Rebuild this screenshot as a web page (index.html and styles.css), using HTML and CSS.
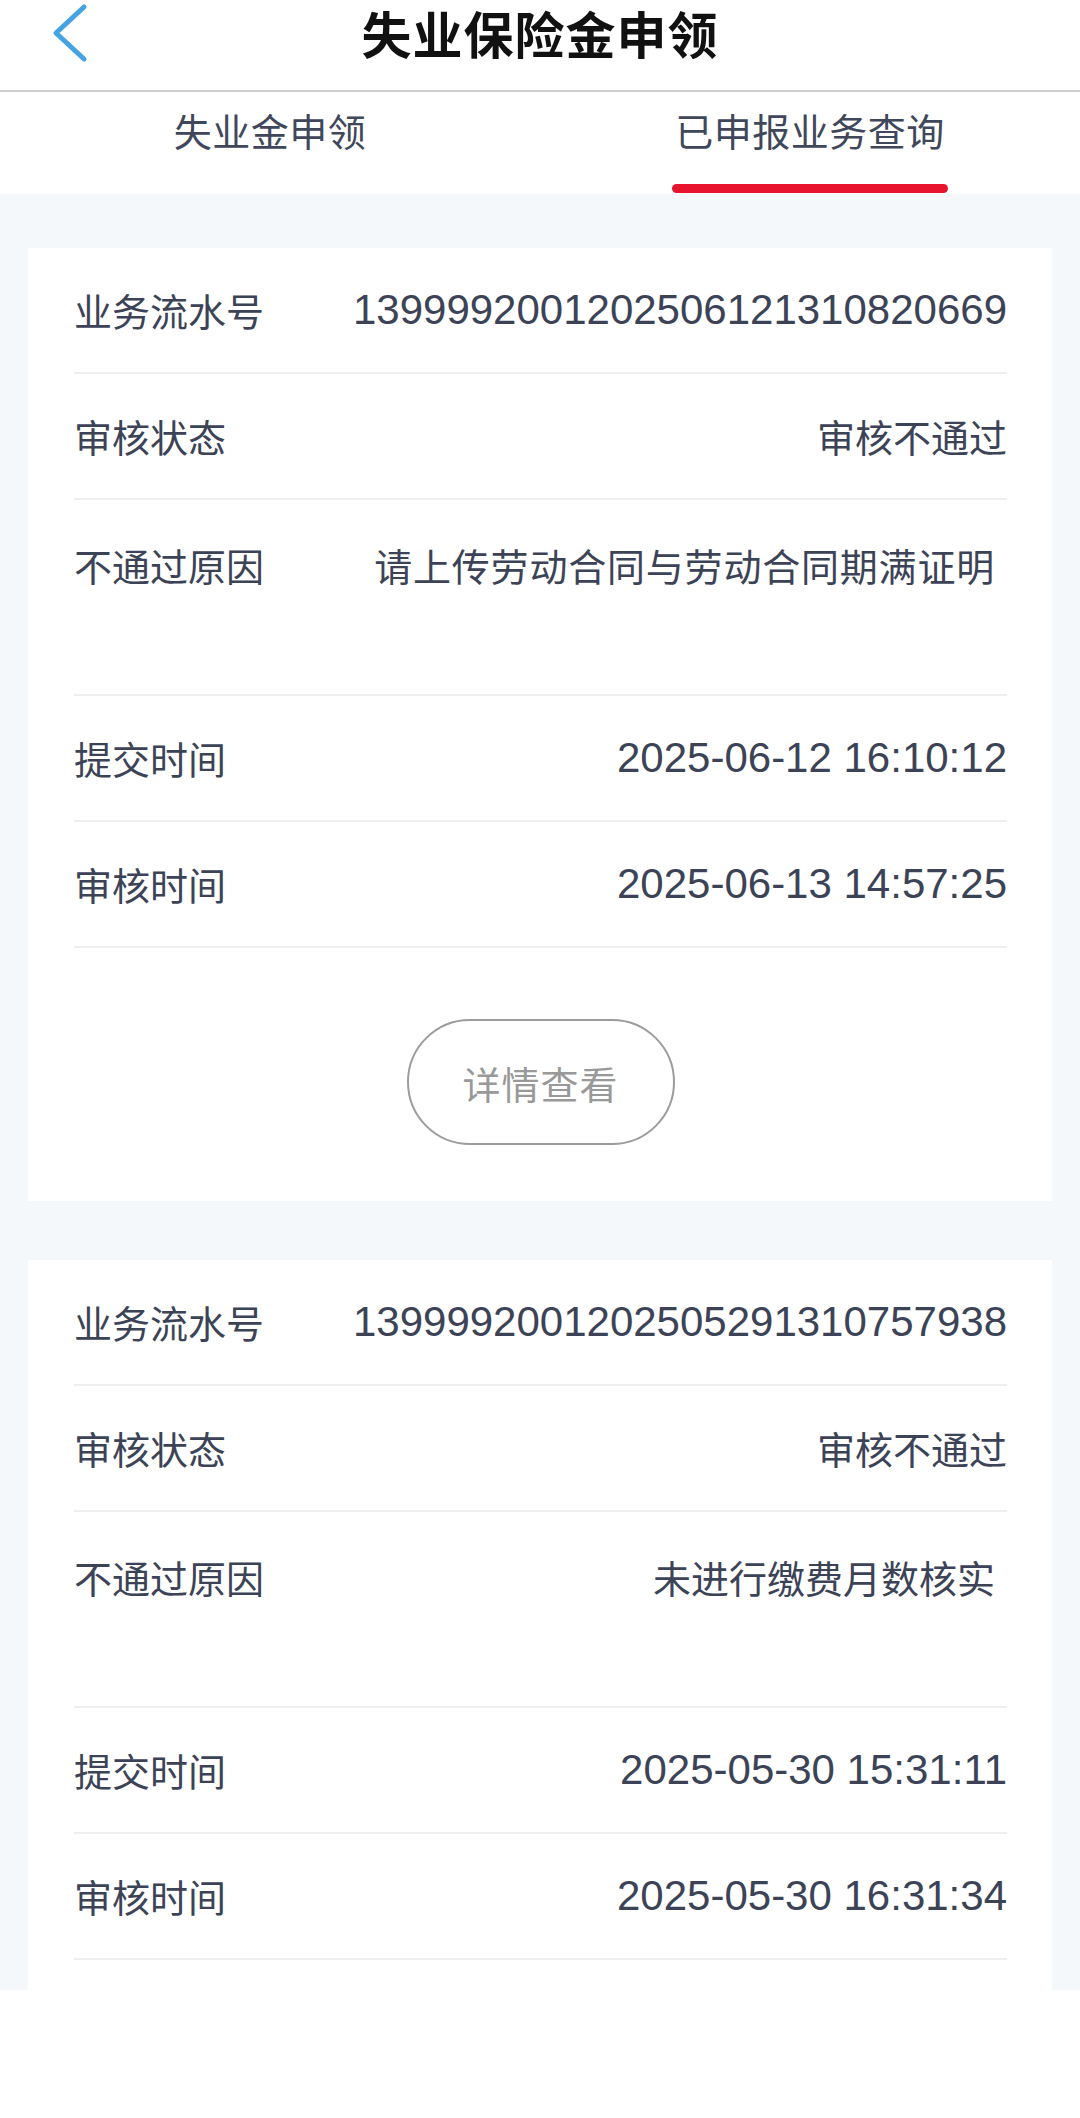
FILE: index.html
```html
<!DOCTYPE html>
<html lang="zh-CN">
<head>
<meta charset="utf-8">
<title>失业保险金申领</title>
<link rel="stylesheet" href="styles.css">
</head>
<body>
<div class="app">
  <header class="topbar">
    <div class="back">
      <svg width="40" height="60" viewBox="0 0 40 60"><path d="M34 4 L6 30 L34 56" fill="none" stroke="#45a3e3" stroke-width="5" stroke-linecap="round" stroke-linejoin="round"/></svg>
    </div>
    <h1 class="title">失业保险金申领</h1>
    <div class="spacer"></div>
  </header>
  <nav class="tabs">
    <div class="tab"><span class="tab-text">失业金申领</span></div>
    <div class="tab active"><span class="tab-text">已申报业务查询</span><span class="tab-line"></span></div>
  </nav>
  <main class="list">
    <section class="card">
      <div class="row"><span class="label">业务流水号</span><span class="value num">1399992001202506121310820669</span></div>
      <div class="row"><span class="label">审核状态</span><span class="value">审核不通过</span></div>
      <div class="row tall"><span class="label">不通过原因</span><span class="value reason">请上传劳动合同与劳动合同期满证明</span></div>
      <div class="row"><span class="label">提交时间</span><span class="value num">2025-06-12 16:10:12</span></div>
      <div class="row"><span class="label">审核时间</span><span class="value num">2025-06-13 14:57:25</span></div>
      <div class="actions"><button class="btn">详情查看</button></div>
    </section>
    <section class="card">
      <div class="row"><span class="label">业务流水号</span><span class="value num">1399992001202505291310757938</span></div>
      <div class="row"><span class="label">审核状态</span><span class="value">审核不通过</span></div>
      <div class="row tall"><span class="label">不通过原因</span><span class="value reason">未进行缴费月数核实</span></div>
      <div class="row"><span class="label">提交时间</span><span class="value num">2025-05-30 15:31:11</span></div>
      <div class="row"><span class="label">审核时间</span><span class="value num">2025-05-30 16:31:34</span></div>
    </section>
  </main>
  <footer class="bottom"></footer>
</div>
</body>
</html>
```
FILE: styles.css
```css
* { box-sizing: border-box; margin: 0; padding: 0; }
html, body { background: #ffffff; }
body {
  font-family: "Noto Sans CJK SC", sans-serif;
  color: #3c4356;
  width: 1080px;
}
.app { width: 1080px; height: 2118px; display: flex; flex-direction: column; }

.topbar {
  height: 92px;
  display: grid;
  grid-template-columns: 1fr auto 1fr;
  align-items: start;
  border-bottom: 2px solid #cfcfcf;
  background: #fff;
}
.back { padding: 3px 0 0 50px; }
.back svg { display: block; }
.title {
  font-size: 50px;
  font-weight: 700;
  line-height: 64px;
  color: #111;
  letter-spacing: 1px;
}

.tabs {
  height: 102px;
  display: flex;
  background: #fff;
}
.tab {
  flex: 1;
  display: flex;
  flex-direction: column;
  align-items: center;
}
.tab-text {
  margin-top: 10px;
  font-size: 38px;
  line-height: 56px;
  color: #40475a;
  letter-spacing: 0.5px;
}
.tab-line {
  margin-top: 26px;
  width: 276px;
  height: 9px;
  border-radius: 5px;
  background: #e8132d;
}

.list {
  height: 1796px;
  overflow: hidden;
  background: #f4f8fa;
  padding: 54px 28px 0;
  display: flex;
  flex-direction: column;
  gap: 59px;
}
.card {
  background: #fff;
  padding: 0 45px 0 46px;
  flex-shrink: 0;
}
.card:last-child { flex-grow: 1; }
.row {
  height: 126px;
  display: flex;
  justify-content: space-between;
  align-items: center;
  border-bottom: 2px solid #efeff1;
}
.row.tall {
  height: 196px;
  align-items: flex-start;
  padding-top: 37px;
}
.label {
  font-size: 38px;
  line-height: 56px;
  color: #3c4356;
  white-space: nowrap;
}
.value {
  font-size: 38px;
  line-height: 56px;
  color: #3c4356;
  text-align: right;
  white-space: nowrap;
}
.value.num {
  font-family: "Liberation Sans", "Noto Sans CJK SC", sans-serif;
  font-size: 42px;
}
.value.reason {
  padding-right: 12px;
}
.card:first-child .value.reason { letter-spacing: 0.8px; }

.actions {
  padding: 71px 0 56px;
  display: flex;
  justify-content: center;
}
.btn {
  width: 268px;
  height: 126px;
  border: 2px solid #9c9c9c;
  border-radius: 63px;
  background: #fff;
  font-family: "Noto Sans CJK SC", sans-serif;
  font-size: 38px;
  color: #999999;
  letter-spacing: 1px;
}

.bottom {
  height: 128px;
  background: #fff;
}
```
